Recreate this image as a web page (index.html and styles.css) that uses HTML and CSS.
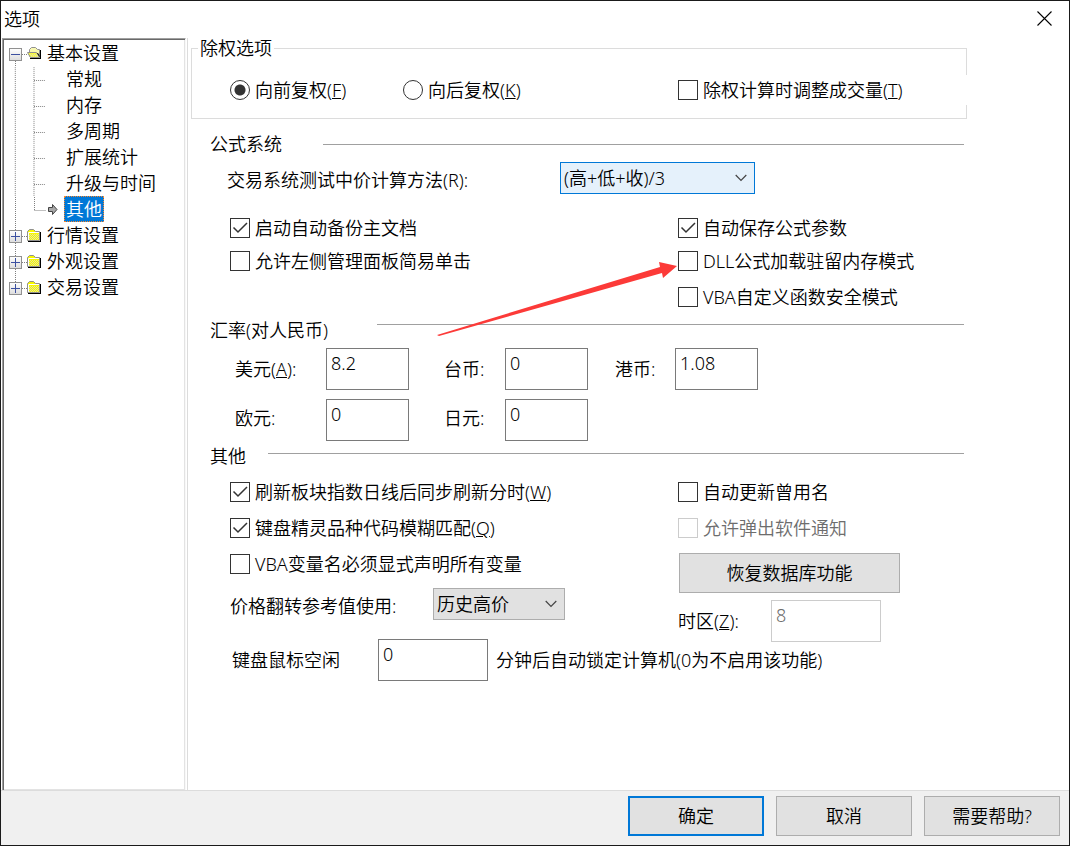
FILE: index.html
```html
<!DOCTYPE html>
<html lang="zh-CN">
<head>
  <meta charset="UTF-8" />
  <meta name="viewport" content="width=device-width, initial-scale=1" />
  <title>选项</title>
  <link rel="stylesheet" href="styles.css">
</head>
<body>

  <!-- Shared icons -->
  <svg class="sprite" aria-hidden="true">
    <defs>
      <linearGradient id="boxFill" x1="0" y1="0" x2="0" y2="1">
        <stop offset="0" stop-color="#ffffff" />
        <stop offset="1" stop-color="#dcdcdc" />
      </linearGradient>
    </defs>
    <symbol id="folder" viewBox="0 0 15 13">
      <path d="M.5 11.500V2.500L2.500 .5H6.500L8.500 2.500H12.500V11.500Z" fill="#f8f800" stroke="#909090" />
      <path d="M3 5.500H12M2 6.500H12M3 7.500H12M2 8.500H12M3 9.500H12M2 10.500H12" fill="none" stroke="#e4e4a0" stroke-dasharray="1 1" />
      <path d="M1.500 11V3.500H12" fill="none" stroke="#fff" />
      <path d="M1 12.500H14M13.500 3V13" fill="none" stroke="#000" />
    </symbol>
    <symbol id="folder-open" viewBox="0 0 15 13">
      <path d="M2.500 9V2.500L4.500 .5H8.500L10.500 2.500H12.500V10.500H4Z" fill="#f8f8b0" stroke="#909090" />
      <path d="M.5 5.500H9.500L12.500 10.500H3.500Z" fill="#f8f840" stroke="#909090" />
      <path d="M3 7.500H10M4 8.500H11M4 9.500H11" fill="none" stroke="#e4e4a0" stroke-dasharray="1 1" />
      <path d="M3 11.500H14M13.500 3V12M10.500 6L12.500 9.500" fill="none" stroke="#000" />
    </symbol>
    <symbol id="plus" viewBox="0 0 13 13">
      <rect x=".5" y=".5" width="12" height="12" fill="url(#boxFill)" stroke="#919191" />
      <path d="M2 6.500H11M6.500 2V11" stroke="#3c50a0" />
    </symbol>
    <symbol id="minus" viewBox="0 0 13 13">
      <rect x=".5" y=".5" width="12" height="12" fill="url(#boxFill)" stroke="#919191" />
      <path d="M2 6.500H11" stroke="#3c50a0" />
    </symbol>
    <symbol id="chevron" viewBox="0 0 12 8">
      <path d="M.7 1L6 6.300L11.300 1" fill="none" stroke="#444" stroke-width="1.200" />
    </symbol>
    <symbol id="guide" viewBox="0 0 61 26">
      <path d="M11.500 0V26M30.500 0V26M30.500 13.500H42" fill="none" stroke="#808080" stroke-dasharray="1 1" />
    </symbol>
  </svg>

  <div class="window">
    <header class="titlebar">
      <span class="title">选项</span>
      <button class="close" type="button" aria-label="关闭">
        <svg width="15" height="15" viewBox="0 0 15 15"><path d="M.5 .5L14.500 14.500M14.500 .5L.5 14.500" stroke="#000" stroke-width="1.100" /></svg>
      </button>
    </header>

    <div class="content">
      <nav class="tree" aria-label="设置分类">
        <ul>
          <li class="branch">
            <svg class="branch-icon" viewBox="0 0 37 26">
              <path d="M11.500 20V26M18 13.500H23" stroke="#808080" stroke-dasharray="1 1" />
              <use href="#minus" x="5" y="7" width="13" height="13" />
              <use href="#folder-open" x="23" y="6" width="15" height="13" />
            </svg>
            <span class="node">基本设置</span>
          </li>
          <li class="leaf"><svg class="leaf-icon"><use href="#guide" /></svg><span class="node">常规</span></li>
          <li class="leaf"><svg class="leaf-icon"><use href="#guide" /></svg><span class="node">内存</span></li>
          <li class="leaf"><svg class="leaf-icon"><use href="#guide" /></svg><span class="node">多周期</span></li>
          <li class="leaf"><svg class="leaf-icon"><use href="#guide" /></svg><span class="node">扩展统计</span></li>
          <li class="leaf"><svg class="leaf-icon"><use href="#guide" /></svg><span class="node">升级与时间</span></li>
          <li class="leaf">
            <svg class="leaf-icon" viewBox="0 0 60 26">
              <path d="M11.500 0V26M30.500 0V14M30.500 13.500H42" fill="none" stroke="#808080" stroke-dasharray="1 1" />
              <path d="M44.500 10.500H48.500V7.500L53 12.500L48.500 17.500V14.500H44.500Z" fill="#a8a8a8" stroke="#444" />
            </svg>
            <span class="node selected">其他</span>
          </li>
          <li class="branch">
            <svg class="branch-icon" viewBox="0 0 37 26">
              <path d="M11.500 0V26M18 13.500H23" stroke="#808080" stroke-dasharray="1 1" />
              <use href="#plus" x="5" y="7" width="13" height="13" />
              <use href="#folder" x="23" y="6" width="15" height="13" />
            </svg>
            <span class="node">行情设置</span>
          </li>
          <li class="branch">
            <svg class="branch-icon" viewBox="0 0 37 26">
              <path d="M11.500 0V26M18 13.500H23" stroke="#808080" stroke-dasharray="1 1" />
              <use href="#plus" x="5" y="7" width="13" height="13" />
              <use href="#folder" x="23" y="6" width="15" height="13" />
            </svg>
            <span class="node">外观设置</span>
          </li>
          <li class="branch">
            <svg class="branch-icon" viewBox="0 0 37 26">
              <path d="M11.500 0V7M18 13.500H23" stroke="#808080" stroke-dasharray="1 1" />
              <use href="#plus" x="5" y="7" width="13" height="13" />
              <use href="#folder" x="23" y="6" width="15" height="13" />
            </svg>
            <span class="node">交易设置</span>
          </li>
        </ul>
      </nav>

      <main class="panel">
        <!-- Ex-rights -->
        <fieldset class="group">
          <legend>除权选项</legend>
          <div class="group-row">
            <label class="check radio-first"><input type="radio" name="exright" checked><span>向前复权(<u>F</u>)</span></label>
            <label class="check radio-second"><input type="radio" name="exright"><span>向后复权(<u>K</u>)</span></label>
            <label class="check volume"><input type="checkbox"><span>除权计算时调整成交量(<u>T</u>)</span></label>
          </div>
        </fieldset>

        <!-- Formula system -->
        <section class="formula">
          <h2 class="heading">公式系统</h2>
          <div class="method">
            <label for="method">交易系统测试中价计算方法(R):</label>
            <div class="dropdown active">
              <select id="method"><option>(高+低+收)/3</option></select>
              <svg class="arrow"><use href="#chevron" /></svg>
            </div>
          </div>
          <div class="columns">
            <div class="left">
              <label class="check"><input type="checkbox" checked><span>启动自动备份主文档</span></label>
              <label class="check"><input type="checkbox"><span>允许左侧管理面板简易单击</span></label>
            </div>
            <div class="right">
              <label class="check"><input type="checkbox" checked><span>自动保存公式参数</span></label>
              <label class="check"><input type="checkbox"><span>DLL公式加载驻留内存模式</span></label>
              <label class="check last"><input type="checkbox"><span>VBA自定义函数安全模式</span></label>
            </div>
          </div>
        </section>

        <!-- Exchange rates -->
        <section class="rates">
          <h2 class="heading">汇率(对人民币)</h2>
          <div class="rate-grid">
            <label for="usd">美元(<u>A</u>):</label>
            <input class="field" type="text" id="usd" value="8.2">
            <label class="indent" for="twd">台币:</label>
            <input class="field" type="text" id="twd" value="0">
            <label class="indent-small" for="hkd">港币:</label>
            <input class="field" type="text" id="hkd" value="1.08">
            <label class="second" for="eur">欧元:</label>
            <input class="field" type="text" id="eur" value="0">
            <label class="indent second" for="jpy">日元:</label>
            <input class="field" type="text" id="jpy" value="0">
          </div>
        </section>

        <!-- Others -->
        <section class="others">
          <h2 class="heading">其他</h2>
          <div class="columns">
            <div class="left">
              <label class="check"><input type="checkbox" checked><span>刷新板块指数日线后同步刷新分时(<u>W</u>)</span></label>
              <label class="check"><input type="checkbox" checked><span>键盘精灵品种代码模糊匹配(<u>Q</u>)</span></label>
              <label class="check"><input type="checkbox"><span>VBA变量名必须显式声明所有变量</span></label>
              <div class="flip">
                <label for="flip">价格翻转参考值使用:</label>
                <div class="dropdown">
                  <select id="flip"><option>历史高价</option></select>
                  <svg class="arrow"><use href="#chevron" /></svg>
                </div>
              </div>
              <div class="idle">
                <label for="idle">键盘鼠标空闲</label>
                <input class="field wide" type="text" id="idle" value="0">
                <span>分钟后自动锁定计算机(0为不启用该功能)</span>
              </div>
            </div>
            <div class="right">
              <label class="check"><input type="checkbox"><span>自动更新曾用名</span></label>
              <label class="check disabled"><input type="checkbox" disabled><span>允许弹出软件通知</span></label>
              <button class="btn restore" type="button">恢复数据库功能</button>
              <div class="zone">
                <label for="zone">时区(<u>Z</u>):</label>
                <input class="field wide" type="text" id="zone" value="8" disabled>
              </div>
            </div>
          </div>
        </section>

        <svg class="pointer" viewBox="0 0 242 76" aria-hidden="true">
          <path d="M0 75L223 7L222 2L240 6L226 18L225 13L2 76Z" fill="#fc3a38" />
        </svg>
      </main>
    </div>

    <footer class="actions">
      <button class="btn default" type="button">确定</button>
      <button class="btn" type="button">取消</button>
      <button class="btn" type="button">需要帮助?</button>
    </footer>
  </div>

</body>
</html>
```

FILE: styles.css
```css
* {
  box-sizing: border-box;
}
body {
  margin: 0;
  background: #fff;
  color: #000;
  font-family: "Noto Sans", "Noto Sans CJK SC", sans-serif;
  font-size: 18px;
  font-weight: 350;
  line-height: 24px;
}
input, select, button {
  font: inherit;
  color: inherit;
  margin: 0;
}
.sprite {
  position: absolute;
  width: 0;
  height: 0;
}
.window {
  display: flex;
  flex-direction: column;
  min-height: 100vh;
  border: 1px solid #1a1a1a;
}

/* title bar */
.titlebar {
  display: flex;
  justify-content: space-between;
  align-items: center;
  height: 37px;
  padding: 0 17px 2px 3px;
}
.close {
  display: flex;
  padding: 0;
  border: none;
  background: none;
}

/* tree */
.content {
  display: flex;
  flex: 1;
  padding-left: 1px;
}
.tree {
  flex: 0 0 184px;
  padding: 1px;
  margin-right: 1px;
  border-top: 1px solid #a0a0a0;
  border-left: 1px solid #a0a0a0;
  border-right: 1px solid #f8f8f8;
  box-shadow: inset 1px 1px #696969, inset -1px -1px #e3e3e3;
}
.tree ul {
  list-style: none;
  margin: 0;
  padding: 0;
}
.tree li {
  display: flex;
  align-items: center;
  height: 26px;
}
.branch-icon {
  width: 37px;
  height: 26px;
  margin-right: 4px;
}
.branch-icon,
.leaf-icon {
  flex: none;
  margin-top: 2px;
  overflow: visible;
}
.leaf-icon {
  width: 60px;
  height: 26px;
}
.node {
  padding: 0 2px;
}
.leaf .node {
  line-height: 26px;
}
.selected {
  background: #0078d7;
  color: #fff;
  outline: 1px dotted #ff8728;
  outline-offset: -1px;
}

/* settings panel */
.panel {
  position: relative;
  flex: 1;
  min-width: 0;
  padding: 0 102px 0 3px;
  border-left: 1px solid #dcdcdc;
  white-space: nowrap;
}
.group {
  min-width: 0;
  margin: 0;
  padding: 17px 0 13px 38px;
  border: 1px solid #dcdcdc;
}
.group legend {
  margin-left: -32px;
  padding: 0 2px;
  line-height: 20px;
}
.group-row {
  display: flex;
  height: 30px;
}
.radio-first {
  width: 173px;
}
.radio-second {
  width: 275px;
}
.volume {
  flex: 1;
  margin-right: -1px;
  background: #fff;
}
.check {
  display: flex;
  align-items: center;
  gap: 5px;
}
.check input {
  appearance: none;
  flex: none;
  width: 20px;
  height: 20px;
  border: 1px solid #333;
  background: #fff;
}
.check input[type="radio"] {
  border-radius: 50%;
}
.check input[type="radio"]:checked {
  background: radial-gradient(circle, #333 5px, #fff 6px);
}
.check input[type="checkbox"]:checked {
  background: url('data:image/svg+xml,<svg xmlns="http://www.w3.org/2000/svg" viewBox="0 0 18 18"><path d="M2.500 8.500L7 13L16 4" fill="none" stroke="%23333" stroke-width="1.500"/></svg>');
}
.disabled {
  color: #6d6d6d;
}
.check input:disabled {
  border-color: #ccc;
}

.heading {
  display: flex;
  margin: 0 3px 0 19px;
  font-size: 18px;
  font-weight: inherit;
}
.heading::after {
  content: "";
  flex: 1;
  height: 1px;
  background: #a0a0a0;
}
.formula .heading::after {
  margin: 12px 0 0 41px;
}
.rates .heading::after {
  margin: 6px 0 0 49px;
}
.others .heading::after {
  margin: 9px 0 0 22px;
}

.columns {
  display: flex;
  padding-left: 39px;
}
.left,
.right {
  display: flex;
  flex-direction: column;
}
.left {
  flex: 0 0 448px;
  min-width: 0;
}
.right {
  align-items: flex-start;
}

.formula {
  padding-top: 13px;
}
.method {
  display: flex;
  align-items: flex-end;
  padding: 6px 0 22px 36px;
}
.method label {
  width: 333px;
  line-height: 28px;
}
.method .dropdown {
  width: 195px;
}
.formula .left,
.formula .right {
  gap: 9px;
}
.formula .last {
  margin-top: 3px;
}

.dropdown {
  position: relative;
  height: 32px;
}
.dropdown select {
  appearance: none;
  display: block;
  width: 100%;
  height: 32px;
  padding: 0 3px;
  border: 1px solid #adadad;
  border-radius: 0;
  background: #e1e1e1;
}
.dropdown.active select {
  border-color: #0078d7;
  background: #e5f1fb;
}
.arrow {
  position: absolute;
  top: 12px;
  right: 8px;
  width: 12px;
  height: 8px;
  pointer-events: none;
}

.rates {
  padding-top: 9px;
}
.rate-grid {
  display: grid;
  grid-template-columns: 91px 83px 96px 83px 87px 83px;
  row-gap: 9px;
  align-items: center;
  padding: 6px 0 0 44px;
}
.indent {
  padding-left: 35px;
}
.indent-small {
  padding-left: 27px;
}
.second {
  padding-bottom: 4px;
}
.field {
  width: 83px;
  height: 42px;
  padding: 0 4px 12px;
  border: 1px solid #7a7a7a;
  border-radius: 0;
  background: #fff;
}
.field:disabled {
  border-color: #ccc;
  color: #6d6d6d;
}
.wide {
  width: 110px;
}

.others {
  padding-top: 3px;
}
.others .columns {
  padding-top: 12px;
}
.others .left,
.others .right {
  gap: 12px;
}
.flip,
.idle,
.zone {
  display: flex;
  align-items: center;
}
.flip label {
  width: 203px;
  padding-top: 4px;
}
.flip .dropdown {
  width: 132px;
}
.idle {
  margin-top: 7px;
  padding-left: 2px;
}
.idle label {
  flex: 0 0 146px;
}
.idle span {
  margin-left: 8px;
}
.btn {
  width: 136px;
  height: 40px;
  padding: 0;
  border: 1px solid #adadad;
  background: #e1e1e1;
}
.btn.default {
  border: 2px solid #0078d7;
}
.restore {
  width: 221px;
  margin: 1px 0 0 1px;
}
.zone {
  margin-top: -5px;
}
.zone label {
  width: 93px;
}

/* red arrow pointing at the DLL option */
.pointer {
  position: absolute;
  top: 222px;
  left: 249px;
  width: 242px;
  height: 76px;
  pointer-events: none;
}

.actions {
  display: flex;
  justify-content: flex-end;
  gap: 12px;
  padding: 5px 9px 9px;
  border-top: 1px solid #dcdcdc;
  background: #f0f0f0;
}
```
